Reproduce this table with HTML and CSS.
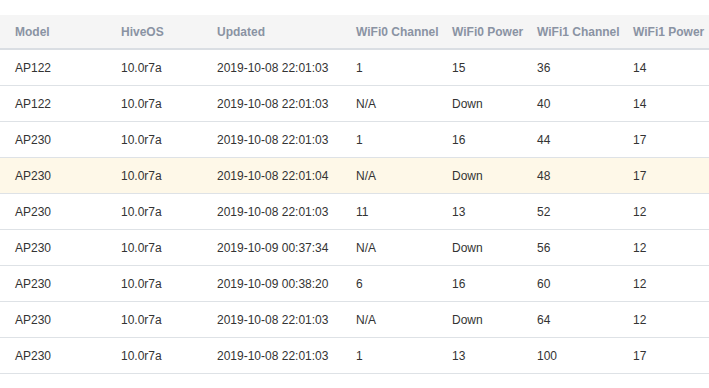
FILE: index.html
```html
<!DOCTYPE html>
<html lang="en">
<head>
    <meta charset="UTF-8">
    <title>Access Points</title>
    <link rel="stylesheet" href="styles.css">
</head>
<body>
    <div class="table-wrap">
        <table class="ap-table">
            <colgroup>
                <col class="c-model">
                <col class="c-os">
                <col class="c-updated">
                <col class="c-w0ch">
                <col class="c-w0pw">
                <col class="c-w1ch">
                <col class="c-w1pw">
            </colgroup>
            <thead>
                <tr>
                    <th>Model</th>
                    <th>HiveOS</th>
                    <th>Updated</th>
                    <th>WiFi0 Channel</th>
                    <th>WiFi0 Power</th>
                    <th>WiFi1 Channel</th>
                    <th>WiFi1 Power</th>
                </tr>
            </thead>
            <tbody>
                <tr><td>AP122</td><td>10.0r7a</td><td>2019-10-08 22:01:03</td><td>1</td><td>15</td><td>36</td><td>14</td></tr>
                <tr><td>AP122</td><td>10.0r7a</td><td>2019-10-08 22:01:03</td><td>N/A</td><td>Down</td><td>40</td><td>14</td></tr>
                <tr><td>AP230</td><td>10.0r7a</td><td>2019-10-08 22:01:03</td><td>1</td><td>16</td><td>44</td><td>17</td></tr>
                <tr class="highlight"><td>AP230</td><td>10.0r7a</td><td>2019-10-08 22:01:04</td><td>N/A</td><td>Down</td><td>48</td><td>17</td></tr>
                <tr><td>AP230</td><td>10.0r7a</td><td>2019-10-08 22:01:03</td><td>11</td><td>13</td><td>52</td><td>12</td></tr>
                <tr><td>AP230</td><td>10.0r7a</td><td>2019-10-09 00:37:34</td><td>N/A</td><td>Down</td><td>56</td><td>12</td></tr>
                <tr><td>AP230</td><td>10.0r7a</td><td>2019-10-09 00:38:20</td><td>6</td><td>16</td><td>60</td><td>12</td></tr>
                <tr><td>AP230</td><td>10.0r7a</td><td>2019-10-08 22:01:03</td><td>N/A</td><td>Down</td><td>64</td><td>12</td></tr>
                <tr><td>AP230</td><td>10.0r7a</td><td>2019-10-08 22:01:03</td><td>1</td><td>13</td><td>100</td><td>17</td></tr>
            </tbody>
        </table>
    </div>
</body>
</html>
```

FILE: styles.css
```css
html, body {
    margin: 0;
    padding: 0;
    background: #fff;
    font-family: "Liberation Sans", Arial, sans-serif;
    font-size: 12px;
    color: #333;
}
.table-wrap {
    width: 709px;
    overflow: hidden;
    padding-top: 15px;
}
.ap-table {
    width: 740px;
    border-collapse: collapse;
    table-layout: fixed;
}
.c-model { width: 106px; }
.c-os { width: 96px; }
.c-updated { width: 139px; }
.c-w0ch { width: 96px; }
.c-w0pw { width: 85px; }
.c-w1ch { width: 96px; }
.c-w1pw { width: 122px; }
th, td {
    text-align: left;
    padding: 0 0 0 15px;
    white-space: nowrap;
}
th {
    height: 33px;
    background: #f5f5f5;
    color: #8a93a3;
    font-weight: 700;
    border-bottom: 2px solid #dadee3;
}
td {
    height: 35px;
    border-bottom: 1px solid #dee2e6;
}
.highlight td {
    background: #fef8e8;
}
```
